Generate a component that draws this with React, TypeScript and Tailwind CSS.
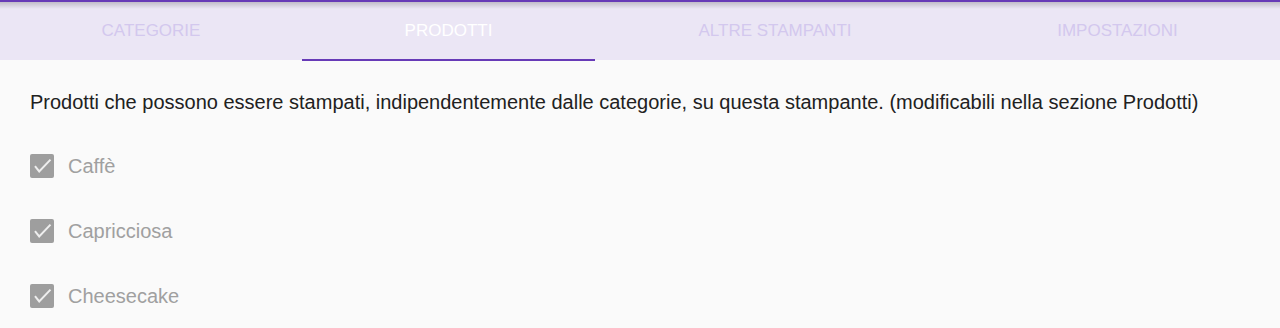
import React from "react";

const tabs = [
  { label: "CATEGORIE", w: "w-[302px]", active: false },
  { label: "PRODOTTI", w: "w-[293px]", active: true },
  { label: "ALTRE STAMPANTI", w: "w-[360px]", active: false },
  { label: "IMPOSTAZIONI", w: "flex-1", active: false },
];

const items = ["Caffè", "Capricciosa", "Cheesecake"];

function Check() {
  return (
    <div className="w-6 h-6 rounded-[2px] bg-[#9e9e9e] shrink-0">
      <svg width="24" height="24" viewBox="0 0 24 24" fill="none">
        <path d="M5 12.2l4.2 5.2L20.5 5.6" stroke="#eeeeee" strokeWidth="2" strokeLinecap="butt" strokeLinejoin="miter" />
      </svg>
    </div>
  );
}

export default function App() {
  return (
    <div className="w-[1280px] h-[328px] bg-[#fafafa] overflow-hidden" style={{ fontFamily: '"Liberation Sans", Arial, sans-serif' }}>
      <div className="relative h-[60px] bg-[#ebe6f5] flex">
        <div className="absolute top-0 left-0 right-0 h-[2px] bg-[#673ab7]" />
        <div className="absolute top-[2px] left-0 right-0 h-[7px] bg-gradient-to-b from-[rgba(0,0,0,0.18)] to-transparent" />
        {tabs.map((t) => (
          <div key={t.label} className={`${t.w} relative flex items-center justify-center pt-[2px]`}>
            <span className={`text-[17px] ${t.active ? "text-white" : "text-[#d3c8ee]"}`}>{t.label}</span>
            {t.active && <div className="absolute left-0 right-0 bottom-[-1px] h-[2px] bg-[#673ab7]" />}
          </div>
        ))}
      </div>
      <div className="px-[30px] pt-[30px]">
        <p className="text-[20px] leading-[24px] text-[#212121]">
          Prodotti che possono essere stampati, indipendentemente dalle categorie, su questa stampante. (modificabili nella sezione Prodotti)
        </p>
        <div className="mt-[40px] flex flex-col gap-[41px]">
          {items.map((it) => (
            <div key={it} className="flex items-center gap-[14px] h-6">
              <Check />
              <span className="text-[20px] text-[#a0a0a0]">{it}</span>
            </div>
          ))}
        </div>
      </div>
    </div>
  );
}
